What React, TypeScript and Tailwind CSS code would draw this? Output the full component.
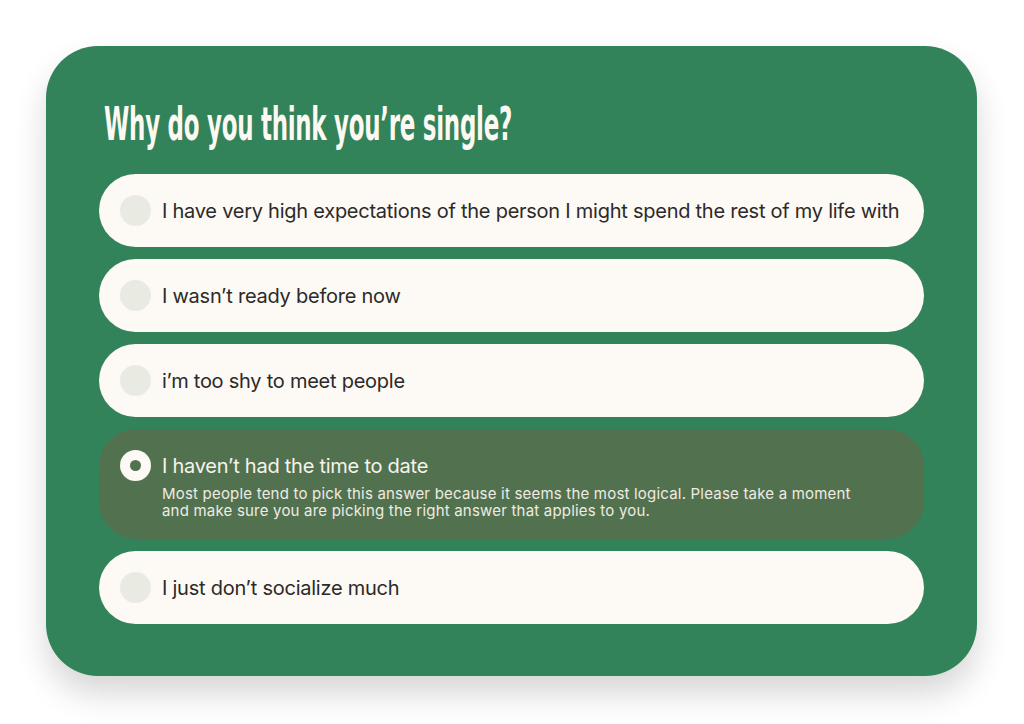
import { useState } from "react"

const options = [
    "I have very high expectations of the person I might spend the rest of my life with",
    "I wasn’t ready before now",
    "i’m too shy to meet people",
    "I haven’t had the time to date",
    "I just don’t socialize much",
]

const hint = "Most people tend to pick this answer because it seems the most logical. Please take a moment and make sure you are picking the right answer that applies to you."

export default function App() {
    const [selected, setSelected] = useState<number>(3)

    return (
        <div className="w-[1024px] h-[724px] bg-white pt-[46px] pl-[46px] font-['Inter',sans-serif]">
            <div className="w-[931px] h-[630px] rounded-[52px] bg-[#32835a] px-[53px] pt-[100px] shadow-[0_18px_32px_rgba(0,0,0,0.16)]">
                <h1 className="-mt-[48px] mb-[24px] ml-[5px] h-[52px] leading-[52px] text-[46px] font-bold text-[#fdf8f2] font-['DejaVu_Sans_Condensed',sans-serif] tracking-[-0.5px] origin-left scale-x-[0.555] whitespace-nowrap">
                    Why do you think you’re single?
                </h1>

                <div className="flex flex-col gap-3">
                    {options.map((label, i) => {
                        const active = i === selected
                        return (
                            <button
                                key={label}
                                onClick={() => setSelected(i)}
                                className={`w-full text-left rounded-[37px] px-[21px] ${active ? "bg-[#52724f] pt-[21px] pb-[20px]" : "bg-[#fdf9f5] py-[21px]"}`}
                            >
                                <div className="flex items-center gap-[11px] h-[31px]">
                                    {active ? (
                                        <span className="w-[31px] h-[31px] rounded-full bg-[#fdf9f4] flex items-center justify-center flex-shrink-0">
                                            <span className="w-[11px] h-[11px] rounded-full bg-[#52724f]" />
                                        </span>
                                    ) : (
                                        <span className="w-[31px] h-[31px] rounded-full bg-[#e9ebe3] flex-shrink-0" />
                                    )}
                                    <span className={`text-[20px] tracking-[-0.25px] ${active ? "text-[#f7f3ec]" : "text-[#2b2a28]"}`}>{label}</span>
                                </div>
                                {active && (
                                    <p className="ml-[42px] mt-[4px] max-w-[700px] text-[15px] tracking-[0.2px] leading-[17px] text-[#efebe3]">{hint}</p>
                                )}
                            </button>
                        )
                    })}
                </div>
            </div>
        </div>
    )
}
